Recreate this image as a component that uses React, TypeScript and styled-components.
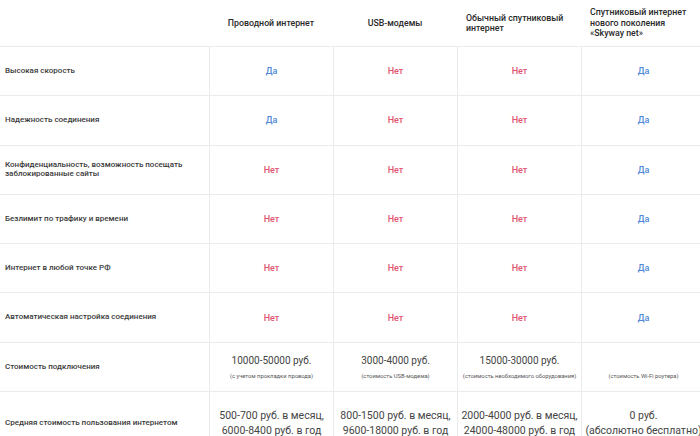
import React from "react";
import styled, { createGlobalStyle } from "styled-components";

const Global = createGlobalStyle`
  html, body { margin: 0; padding: 0; background: #fff; overflow: hidden; }
  body { font-family: Roboto, "Liberation Sans", Arial, sans-serif; color: #333; }
`;

const Table = styled.div`
  display: grid;
  grid-template-columns: 209px repeat(4, 124px);
  grid-template-rows: 46px repeat(7, 49.3px) 63px;
  width: 705px;
`;

const HeadCell = styled.div`
  display: flex;
  align-items: center;
  justify-content: center;
  padding: 0 9px;
`;

const HeadText = styled.div`
  font-size: 8.8px;
  font-weight: 500;
  line-height: 10.5px;
  color: #2a2a2a;
  text-align: left;
`;

const Cell = styled.div<{ $first?: boolean }>`
  border-top: 1px solid #ebebeb;
  border-left: ${(p) => (p.$first ? "none" : "1px solid #ebebeb")};
  display: flex;
  flex-direction: column;
  align-items: ${(p) => (p.$first ? "flex-start" : "center")};
  justify-content: center;
  padding: ${(p) => (p.$first ? "0 0 0 5px" : "0 2px")};
  box-sizing: border-box;
  text-align: ${(p) => (p.$first ? "left" : "center")};
`;

const Label = styled.div`
  font-size: 8px;
  font-weight: 500;
  line-height: 8.5px;
  color: #3a3a3a;
`;

const Answer = styled.span<{ $yes: boolean }>`
  font-size: 9px;
  font-weight: 500;
  color: ${(p) => (p.$yes ? "#5088d8" : "#e05570")};
`;

const Price = styled.div<{ $big?: boolean }>`
  font-size: ${(p) => (p.$big ? "10.5px" : "10px")};
  line-height: 15px;
  color: #444;
  white-space: nowrap;
`;

const Note = styled.div`
  font-size: 5.8px;
  line-height: 8px;
  color: #555;
  margin-top: 4px;
  white-space: nowrap;
`;

const heads = [
  "Проводной интернет",
  "USB-модемы",
  "Обычный спутниковый интернет",
  "Спутниковый интернет нового поколения «Skyway net»",
];

const rows: [string, boolean[]][] = [
  ["Высокая скорость", [true, false, false, true]],
  ["Надежность соединения", [true, false, false, true]],
  ["Конфиденциальность, возможность посещать заблокированные сайты", [false, false, false, true]],
  ["Безлимит по трафику и времени", [false, false, false, true]],
  ["Интернет в любой точке РФ", [false, false, false, true]],
  ["Автоматическая настройка соединения", [false, false, false, true]],
];

const connect: [string, string][] = [
  ["10000-50000 руб.", "(с учетом прокладки провода)"],
  ["3000-4000 руб.", "(стоимость USB-модема)"],
  ["15000-30000 руб.", "(стоимость необходимого оборудования)"],
  ["", "(стоимость Wi-Fi роутера)"],
];

const usage: [string, string][] = [
  ["500-700 руб. в месяц,", "6000-8400 руб. в год"],
  ["800-1500 руб. в месяц,", "9600-18000 руб. в год"],
  ["2000-4000 руб. в месяц,", "24000-48000 руб. в год"],
  ["0 руб.", "(абсолютно бесплатно)"],
];

const LabelWrap = styled.div`
  max-width: 200px;
`;

export default function App() {
  return (
    <>
      <Global />
      <Table>
        <HeadCell />
        {heads.map((h) => (
          <HeadCell key={h}>
            <HeadText>{h}</HeadText>
          </HeadCell>
        ))}
        {rows.map(([label, vals]) => (
          <React.Fragment key={label}>
            <Cell $first>
              <LabelWrap>
                <Label>{label}</Label>
              </LabelWrap>
            </Cell>
            {vals.map((v, i) => (
              <Cell key={i}>
                <Answer $yes={v}>{v ? "Да" : "Нет"}</Answer>
              </Cell>
            ))}
          </React.Fragment>
        ))}
        <Cell $first>
          <Label>Стоимость подключения</Label>
        </Cell>
        {connect.map(([p, n], i) => (
          <Cell key={i}>
            <Price>{p || "\u00a0"}</Price>
            <Note>{n}</Note>
          </Cell>
        ))}
        <Cell $first>
          <Label>Средняя стоимость пользования интернетом</Label>
        </Cell>
        {usage.map(([a, b], i) => (
          <Cell key={i}>
            <Price $big>{a}</Price>
            <Price $big>{b}</Price>
          </Cell>
        ))}
      </Table>
    </>
  );
}
